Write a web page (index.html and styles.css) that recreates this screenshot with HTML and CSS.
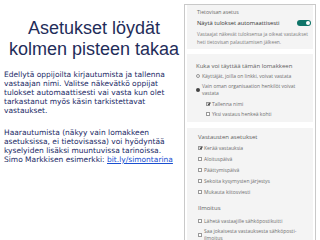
FILE: index.html
```html
<!DOCTYPE html>
<html lang="fi">
<head>
<meta charset="utf-8">
<title>Asetukset</title>
<link rel="stylesheet" href="styles.css">
</head>
<body>
<div class="page">
  <div class="left">
    <h1 class="title">Asetukset löydät<br>kolmen pisteen takaa</h1>
    <p class="para">Edellytä oppijoilta kirjautumista ja tallenna<br>vastaajan nimi. Valitse näkevätkö oppijat<br>tulokset automaattisesti vai vasta kun olet<br>tarkastanut myös käsin tarkistettavat<br>vastaukset.</p>
    <p class="para">Haarautumista (näkyy vain lomakkeen<br>asetuksissa, ei tietovisassa) voi hyödyntää<br>kyselyiden lisäksi muuntuvissa tarinoissa.<br>Simo Markkisen esimerkki: <a class="link" href="#">bit.ly/simontarina</a></p>
  </div>
  <div class="panel">
    <section class="sec s1">
      <div class="hd">Tietovisan asetus</div>
      <div class="row"><span class="strong">Näytä tulokset automaattisesti</span><span class="toggle"><span class="knob"></span></span></div>
      <div class="desc">Vastaajat näkevät tuloksensa ja oikeat vastaukset<br>heti tietovisan palauttamisen jälkeen.</div>
    </section>
    <section class="sec s2">
      <div class="hd big">Kuka voi täyttää tämän lomakkeen</div>
      <div class="opt"><span class="radio"></span><span>Käyttäjät, joilla on linkki, voivat vastata</span></div>
      <div class="opt two"><span class="radio on"></span><span>Vain oman organisaation henkilöt voivat<br>vastata</span></div>
      <div class="opt sub first-sub"><span class="cb checked"></span><span>Tallenna nimi</span></div>
      <div class="opt sub"><span class="cb"></span><span>Yksi vastaus henkeä kohti</span></div>
    </section>
    <section class="sec s3">
      <div class="hd big">Vastausten asetukset</div>
      <div class="opt"><span class="cb checked"></span><span>Kerää vastauksia</span></div>
      <div class="opt"><span class="cb"></span><span>Aloituspäivä</span></div>
      <div class="opt"><span class="cb"></span><span>Päättymispäivä</span></div>
      <div class="opt"><span class="cb"></span><span>Sekoita kysymysten järjestys</span></div>
      <div class="opt"><span class="cb"></span><span>Mukauta kiitosviesti</span></div>
      <div class="hd big h-ilm">Ilmoitus</div>
      <div class="opt first"><span class="cb"></span><span>Lähetä vastaajille sähköpostikuitti</span></div>
      <div class="opt two"><span class="cb"></span><span>Saa jokaisesta vastauksesta sähköposti-<br>ilmoitus</span></div>
    </section>
  </div>
</div>
</body>
</html>
```
FILE: styles.css
```css
html, body {
  margin: 0;
  padding: 0;
  background: #ffffff;
}
.page {
  width: 320px;
  height: 240px;
  display: flex;
  overflow: hidden;
}
.left {
  width: 184px;
  flex: none;
  padding-left: 4px;
  box-sizing: border-box;
}
.title {
  margin: 18px 0 0 0;
  font-family: "Liberation Sans", Arial, sans-serif;
  font-weight: normal;
  font-size: 18px;
  line-height: 21px;
  color: #1f2d5a;
  text-align: center;
}
.para {
  margin: 10px 0 0 0;
  font-family: "DejaVu Sans", Verdana, sans-serif;
  font-size: 7.5px;
  line-height: 9px;
  color: #1c2a66;
  white-space: nowrap;
}
.para + .para {
  margin-top: 13px;
}
.link {
  color: #1a4fd0;
  text-decoration: underline;
}
.panel {
  width: 132px;
  flex: none;
  margin-top: 4px;
  border: 1px solid #c9c9c9;
  border-bottom: none;
  padding: 0 2px;
  box-sizing: border-box;
  height: 236px;
  background: #ffffff;
  font-family: "Open Sans", "Noto Sans", sans-serif;
  color: #666;
  white-space: nowrap;
}
.sec {
  background: #f4f4f4;
  padding-left: 10px;
  padding-right: 2px;
}
.s1 {
  padding-top: 3px;
  padding-bottom: 3px;
}
.s2 {
  margin-top: 5px;
  padding-top: 8px;
  padding-bottom: 4px;
  padding-left: 9px;
}
.s3 {
  margin-top: 6px;
  padding-top: 5px;
  padding-bottom: 20px;
  padding-left: 11px;
}
.hd {
  font-size: 5.2px;
  line-height: 8px;
  color: #6a6a6a;
}
.hd.big {
  font-size: 6px;
  color: #5e5e5e;
}
.row {
  margin-top: 3px;
  display: flex;
  align-items: center;
  justify-content: space-between;
  line-height: 8px;
}
.strong {
  font-size: 5.8px;
  color: #333;
}
.toggle {
  width: 14px;
  height: 6px;
  border-radius: 3px;
  background: #0e7468;
  display: flex;
  align-items: center;
  justify-content: flex-end;
  padding-right: 1px;
  box-sizing: border-box;
}
.knob {
  width: 4px;
  height: 4px;
  border-radius: 50%;
  background: #fff;
}
.desc {
  margin-top: 3px;
  font-size: 4.85px;
  line-height: 8px;
  color: #808080;
}
.opt {
  display: flex;
  align-items: center;
  gap: 2px;
  margin-top: 2px;
  font-size: 5px;
  line-height: 8px;
  color: #707070;
}
.opt.two {
  align-items: flex-start;
  line-height: 7px;
  margin-top: 3px;
}
.opt.two .radio, .opt.two .cb {
  margin-top: 5px;
}
.opt.sub {
  padding-left: 10px;
}
.opt.first-sub {
  margin-top: 3px;
}
.s3 .opt {
  margin-top: 3px;
}
.radio {
  width: 4px;
  height: 4px;
  border: 0.6px solid #999;
  border-radius: 50%;
  box-sizing: border-box;
  flex: none;
}
.radio.on {
  border: none;
  background: #444;
}
.cb {
  width: 4px;
  height: 4px;
  border: 0.6px solid #999;
  box-sizing: border-box;
  flex: none;
  position: relative;
  background: #fff;
}
.cb.checked::after {
  content: "";
  position: absolute;
  left: 0.8px;
  top: -0.6px;
  width: 1.2px;
  height: 2.4px;
  border-right: 0.7px solid #444;
  border-bottom: 0.7px solid #444;
  transform: rotate(40deg);
}
.h-ilm {
  margin-top: 8px;
}
.s3 .opt.first {
  margin-top: 5px;
}
```
